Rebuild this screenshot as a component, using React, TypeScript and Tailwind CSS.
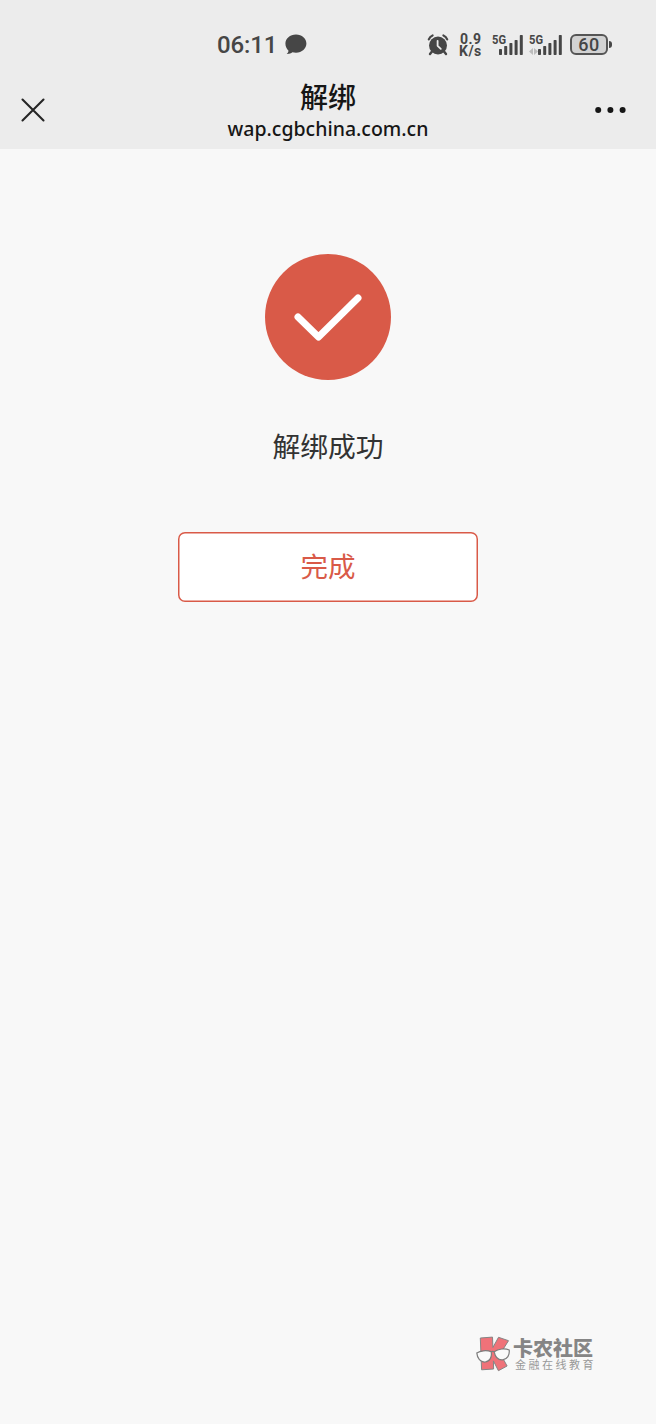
import React from "react";

const AlarmIcon = () => (
  <svg width="22" height="22" viewBox="0 0 22 22" fill="none" className="shrink-0">
    <circle cx="11" cy="11.5" r="9" fill="#464646" />
    <path d="M1.8 5.4C2.6 3.4 3.8 2.2 5.6 1.5M20.2 5.4C19.4 3.4 18.2 2.2 16.4 1.5" stroke="#464646" strokeWidth="2.2" strokeLinecap="round" />
    <path d="M5 17.5l-2 2.6M17 17.5l2 2.6" stroke="#464646" strokeWidth="2.4" strokeLinecap="round" />
    <path d="M10.6 6.8v5l3.2 3" stroke="#ececec" strokeWidth="1.8" strokeLinecap="round" strokeLinejoin="round" />
  </svg>
);

const ChatBubble = () => (
  <svg width="22" height="21" viewBox="0 0 22 21" className="shrink-0">
    <path d="M11 .5C5 .5.4 4.5.4 9.6c0 3.1 1.4 5.5 3 6.9.2 1.3-.5 2.5-1.7 3.4 2.2.2 4.3-.5 5.7-1.6 1.1.3 2.3.4 3.6.4 6 0 10.4-4 10.4-9.1S17 .5 11 .5z" fill="#464646" />
  </svg>
);

const bars = [
  { x: 0, h: 6 },
  { x: 5.2, h: 9 },
  { x: 10.4, h: 12 },
  { x: 15.6, h: 15 },
  { x: 20.8, h: 20 },
];

interface SignalProps {
  width: number;
  offset: number;
  idle?: boolean;
}

const Signal: React.FC<SignalProps> = ({ width, offset, idle }) => (
  <svg width={width} height="22" viewBox={`0 0 ${width} 22`} className="shrink-0 overflow-visible">
    <text x="0" y="10" fontSize="13" fontWeight="700" fontFamily="Roboto, sans-serif" fill="#464646" textLength="14" lengthAdjust="spacingAndGlyphs">
      5G
    </text>
    {idle && <path d="M0 17.5l4-3.5v7zM9 17.5l-4-3.5v7z" fill="#bcbcbc" />}
    {bars.map((b) => (
      <rect key={b.x} x={offset + b.x} y={21 - b.h} width="3" height={b.h} rx=".7" fill="#464646" />
    ))}
  </svg>
);

const StatusBar = () => (
  <div className="flex h-[75px] items-center pt-[14px] pl-[217px] text-[#464646]">
    <div className="w-[68px] font-['Roboto',sans-serif] text-[24px] leading-none font-medium tracking-[-0.1px]">06:11</div>
    <ChatBubble />
    <div className="ml-[120px] flex items-center">
      <AlarmIcon />
      <div className="ml-[10px] w-[33px] pt-px font-['Roboto',sans-serif] text-[14px] leading-[12px] font-bold tracking-[0.5px]">
        <div className="pl-px">0.9</div>
        <div>K/s</div>
      </div>
      <Signal width={37} offset={7} />
      <Signal width={41} offset={9} idle />
      <div className="flex items-center">
        <div className="flex h-[21px] w-[38px] items-center justify-center rounded-[6px] border-2 border-[#555] bg-[#d2d2d2] font-['Roboto',sans-serif] text-[18px] leading-none font-medium tracking-[0.5px]">
          60
        </div>
        <div className="ml-px h-[7px] w-[2.5px] rounded-r-sm bg-[#464646]" />
      </div>
    </div>
  </div>
);

const NavBar = () => (
  <div className="flex h-[74px] items-start justify-between pr-[30px] pl-[21px] text-[#161616]">
    <svg width="24" height="24" viewBox="0 0 24 24" fill="none" className="mt-[23px]">
      <path d="M1.5 1.5l21 21M22.5 1.5l-21 21" stroke="#252525" strokeWidth="2.1" strokeLinecap="round" />
    </svg>
    <div className="ml-[16px] flex flex-col items-center">
      <h1 className="mt-[4px] text-[28px] leading-[34px] font-medium">解绑</h1>
      <p className="mt-[4px] font-['Noto_Sans',sans-serif] text-[19.5px] leading-[24px] font-medium">
        wap.cgbchina.com.cn
      </p>
    </div>
    <svg width="31" height="8" viewBox="0 0 31 8" className="mt-[31px]" fill="#161616">
      <circle cx="3.2" cy="4" r="3" />
      <circle cx="15.4" cy="4" r="3" />
      <circle cx="27.6" cy="4" r="3" />
    </svg>
  </div>
);

const BrandMark = () => (
  <svg width="35" height="36" viewBox="0 0 35 36" fill="none" className="mt-px shrink-0">
    <path
      d="M4.3 2l12.2-.9.4 10.4L22.500 1.300l10 3.400-8.200 13 6.800 12.300-8.700 4.700-5-9.800.2 8.100-12 .8z"
      fill="#ef7279"
      stroke="#858585"
      strokeWidth="1"
    />
    <path
      d="M.8 16.900c3.400-2.200 9.700-3 14.300-1.300 1.200 5.400-1.300 9.900-5.900 10.400C4.500 26.400 1.200 22.500.8 16.900zM18.200 15.800c4.100-3 10.500-3.800 15-1.800.6 5.100-1.900 9.300-6.500 9.800-4.500.4-7.500-3-8.500-8zM15.100 15.900q1.600-1.200 3.100-.1"
      fill="#fafafa"
      stroke="#7d7d7d"
      strokeWidth="1.2"
    />
  </svg>
);

const Watermark = () => (
  <div className="flex items-start text-[#858585]">
    <BrandMark />
    <div className="ml-[2px]">
      <div className="pt-[2px] text-[20px] leading-[22px] font-black whitespace-nowrap">卡农社区</div>
      <div className="-mt-[2px] ml-[2px] text-[11px] leading-[14px] font-normal tracking-[2.5px] whitespace-nowrap text-[#999]">
        金融在线教育
      </div>
    </div>
  </div>
);

export default function App() {
  return (
    <div className="flex h-[1424px] w-[656px] flex-col bg-[#f8f8f8] font-['Noto_Sans_CJK_SC',sans-serif]">
      <header className="bg-[#ececec]">
        <StatusBar />
        <NavBar />
      </header>

      <main className="flex flex-1 flex-col items-center pt-[105px]">
        <svg width="126" height="126" viewBox="0 0 126 126" fill="none">
          <circle cx="63" cy="63" r="63" fill="#d95a48" />
          <path d="M33 63l20.5 20L93 44" stroke="#fff" strokeWidth="7" strokeLinecap="round" strokeLinejoin="round" />
        </svg>
        <p className="mt-[45px] text-[27.8px] leading-[40px] text-[#333]">解绑成功</p>
        <button className="mt-[67px] h-[70px] w-[300px] rounded-[7px] bg-white pb-[2px] text-[27.5px] leading-none text-[#d95a48] shadow-[inset_0_0_0_1.5px_#d95a48]">
          完成
        </button>
      </main>

      <footer className="flex justify-end pr-[60px] pb-[52px]">
        <Watermark />
      </footer>
    </div>
  );
}
